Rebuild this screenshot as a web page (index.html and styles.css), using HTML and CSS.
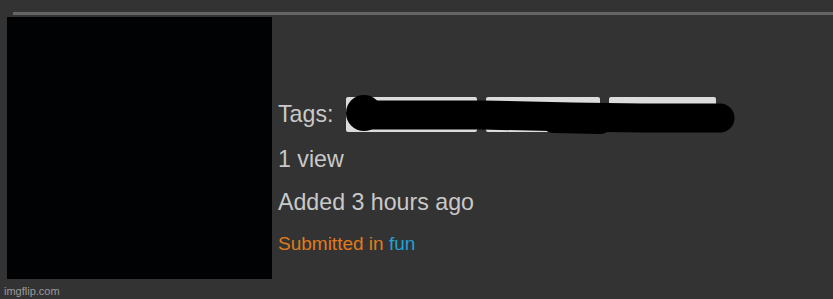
FILE: index.html
```html
<!DOCTYPE html>
<html lang="en">
<head>
<meta charset="UTF-8" />
<meta name="viewport" content="width=device-width, initial-scale=1" />
<title>Image details</title>
<link rel="stylesheet" href="styles.css">
</head>
<body>
<div class="page">
  <div class="rule"></div>
  <div class="row">
    <div class="thumb"></div>
    <div class="info">
      <div class="tags">
        <span class="tags-label">Tags:</span>
        <div class="tag-list">
          <span class="tag tag-1"></span>
          <span class="tag tag-2"></span>
          <span class="tag tag-3"></span>
          <!-- scribbled out -->
          <svg class="scribble" width="400" height="46" viewBox="0 0 400 46">
            <circle cx="22" cy="20" r="18" fill="#000" />
            <path d="M 22 22 L 140 22 L 230 24 L 300 25 L 378 25" stroke="#000" stroke-width="29" stroke-linecap="round" stroke-linejoin="round" fill="none" />
            <path d="M 212 26 L 258 27" stroke="#000" stroke-width="28" stroke-linecap="round" fill="none" />
          </svg>
        </div>
      </div>
      <div class="line">1 view</div>
      <div class="line">Added 3 hours ago</div>
      <div class="submitted">Submitted in <span class="stream">fun</span></div>
    </div>
  </div>
  <div class="watermark">imgflip.com</div>
</div>
</body>
</html>
```

FILE: styles.css
```css
body { margin:0; background:#333; font-family:"Liberation Sans", Arial, sans-serif; }
.page { padding-top:12px; }
.rule { height:3px; margin-left:13px; background:#656565; }
.row { display:flex; gap:6px; margin-top:2px; padding-left:7px; }
.thumb { width:265px; height:262px; background:#010203; }
.info { padding-top:80px; color:#c9c9c9; font-size:23.2px; }
.tags { display:flex; align-items:center; gap:13px; height:35px; }
.tag-list { position:relative; display:flex; gap:9px; }
.tag { display:block; height:35px; background:#dcdcdc; border-radius:2px; }
.tag-1 { width:131px; }
.tag-2 { width:114px; }
.tag-3 { width:107px; }
.scribble { position:absolute; left:-4px; top:-4px; }
.line { line-height:43px; }
.tags + .line { margin-top:6px; }
.submitted { font-size:19px; line-height:40px; color:#e07b1c; }
.stream { color:#1fa3d6; }
.watermark { margin-top:6px; padding-left:4px; font-size:11px; color:#9a9a9a; }
```
